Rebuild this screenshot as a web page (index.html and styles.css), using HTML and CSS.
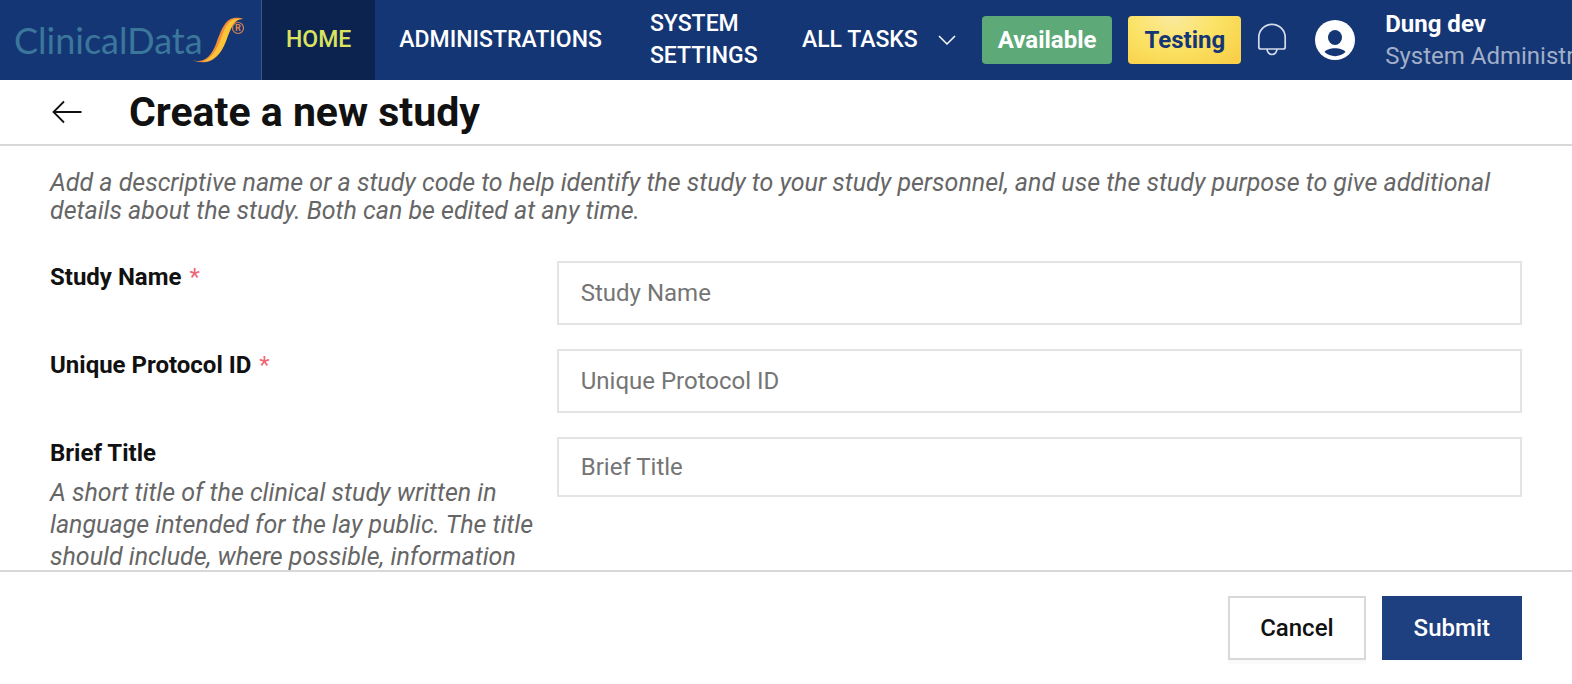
FILE: index.html
```html
<!DOCTYPE html>
<html lang="en">
<head>
    <meta charset="UTF-8">
    <meta name="viewport" content="width=device-width, initial-scale=1.0">
    <title>Create a new study</title>
    <link rel="stylesheet" href="styles.css">
</head>
<body>
    <header class="navbar">
        <a class="logo" href="#">
            <span class="logo-text">ClinicalData</span>
            <svg class="logo-mark" width="56" height="48" viewBox="0 0 56 48" aria-hidden="true">
                <path d="M1 43C14 49 22 41 27 28C34 9 38 -2 55 3C46 2 42 11 37 25C30 44 18 51 1 43Z" fill="#f08d3c"/>
                <path d="M14 45.500C24 42 29 31 33 20C37 8 41 1 53 3C45 3 42 11 37 25C32 38 24 46 14 45.500Z" fill="#fbc436"/>
                <circle cx="49" cy="12" r="5.500" fill="none" stroke="#d9844f" stroke-width="1.200"/>
                <text class="logo-reg" x="49" y="15" text-anchor="middle">R</text>
            </svg>
        </a>
        <nav class="menu">
            <a class="menu-item active" href="#">HOME</a>
            <a class="menu-item" href="#">ADMINISTRATIONS</a>
            <a class="menu-item menu-system" href="#">SYSTEM SETTINGS</a>
            <a class="menu-item" href="#">ALL TASKS
                <svg class="chevron" width="18" height="12" viewBox="0 0 18 12" aria-hidden="true">
                    <path d="M1 2L9 10L17 2" fill="none" stroke="#fff" stroke-width="1.5"/>
                </svg>
            </a>
        </nav>
        <div class="tools">
            <button class="tag tag-available" type="button">Available</button>
            <button class="tag tag-testing" type="button">Testing</button>
            <button class="icon-btn" type="button" aria-label="Notifications">
                <svg width="30" height="34" viewBox="0 0 30 34">
                    <path d="M1.8 24V14.5a13.2 13.2 0 0 1 26.400 0V24a2 2 0 0 1-2 2H3.800a2 2 0 0 1-2-2ZM10 26a5 5.500 0 0 0 10 0" fill="none" stroke="#d3daea" stroke-width="1.700"/>
                </svg>
            </button>
        </div>
        <a class="user" href="#">
            <svg class="avatar" width="40" height="40" viewBox="0 0 40 40" aria-hidden="true">
                <circle cx="20" cy="20" r="20" fill="#fff"/>
                <ellipse cx="20" cy="17.500" rx="7" ry="7.500" fill="#153675"/>
                <path d="M9.500 32C13 27 27 27 30.500 32C25 37.500 15 37.500 9.500 32Z" fill="#153675"/>
            </svg>
            <span class="user-info">
                <span class="user-name">Dung dev</span>
                <span class="user-role">System Administrator</span>
            </span>
        </a>
    </header>

    <div class="title-bar">
        <a class="back" href="#" aria-label="Back">
            <svg width="30" height="24" viewBox="0 0 30 24">
                <path d="M12 1.500L1.500 12L12 22.500M1.500 12H29.500" fill="none" stroke="#111" stroke-width="1.800"/>
            </svg>
        </a>
        <h1>Create a new study</h1>
    </div>

    <form class="study-form" id="study-form">
        <p class="intro">Add a descriptive name or a study code to help identify the study to your study personnel, and use the study purpose to give additional details about the study. Both can be edited at any time.</p>
        <div class="form-row">
            <label for="study-name">Study Name <span class="required">*</span></label>
            <input class="field" type="text" id="study-name" placeholder="Study Name" required>
        </div>
        <div class="form-row">
            <label for="protocol-id">Unique Protocol ID <span class="required">*</span></label>
            <input class="field" type="text" id="protocol-id" placeholder="Unique Protocol ID" required>
        </div>
        <div class="form-row">
            <div>
                <label for="brief-title">Brief Title</label>
                <p class="help">A short title of the clinical study written in language intended for the lay public. The title should include, where possible, information</p>
            </div>
            <input class="field field-small" type="text" id="brief-title" placeholder="Brief Title">
        </div>
    </form>

    <footer class="actions">
        <button class="btn btn-cancel" type="button">Cancel</button>
        <button class="btn btn-submit" type="submit" form="study-form">Submit</button>
    </footer>
</body>
</html>
```

FILE: styles.css
```css
* {
    box-sizing: border-box;
}
body {
    margin: 0;
    height: 100vh;
    display: flex;
    flex-direction: column;
    overflow: hidden;
    font-family: Roboto, Arial, sans-serif;
    font-size: 24px;
    line-height: 32px;
    color: #111;
    background: #fff;
}
a {
    color: inherit;
    text-decoration: none;
}
button,
input {
    font: inherit;
}

/* navbar */
.navbar {
    display: flex;
    flex-shrink: 0;
    height: 80px;
    background: #153675;
    color: #fff;
    font-weight: 500;
}
.logo {
    display: flex;
    align-items: center;
    flex: 0 0 262px;
    padding-left: 14px;
    border-right: 1px solid #3c5790;
}
.logo-text {
    font-family: Lato, sans-serif;
    font-size: 36px;
    font-weight: 400;
    color: #3b779b;
}
.logo-mark {
    flex-shrink: 0;
    margin-left: -14px;
}
.logo-reg {
    font-size: 9px;
    font-weight: 700;
    fill: #d9844f;
}
.menu {
    display: flex;
    flex-shrink: 0;
    font-size: 23px;
    white-space: nowrap;
}
.menu-item {
    display: flex;
    align-items: center;
    padding: 0 24px;
}
.menu-item.active {
    background: #0c2350;
    color: #dbe35f;
}
.menu-system {
    width: 152px;
    white-space: normal;
}
.chevron {
    margin-left: 20px;
}
.tools {
    display: flex;
    align-items: center;
    flex-shrink: 0;
    gap: 16px;
    margin-left: 2px;
}
.tag {
    height: 48px;
    padding: 0 16px;
    border: 0;
    border-radius: 4px;
    font-weight: 700;
}
.tag-available {
    background: #5da978;
    color: #fff;
}
.tag-testing {
    background: radial-gradient(ellipse at 40% 0, #fbe9a0 0%, #fbe366 45%, #f9d048 90%);
    color: #153675;
}
.icon-btn {
    display: flex;
    padding: 0;
    border: 0;
    background: none;
}
.user {
    display: flex;
    align-items: center;
    margin-left: 28px;
}
.avatar {
    flex-shrink: 0;
}
.user-info {
    display: flex;
    flex-direction: column;
    margin-left: 30px;
    white-space: nowrap;
}
.user-name {
    font-weight: 700;
}
.user-role {
    font-weight: 400;
    color: #a1afc8;
}

/* title */
.title-bar {
    display: flex;
    align-items: center;
    flex-shrink: 0;
    height: 66px;
    padding: 0 52px;
    border-bottom: 2px solid #d8d8d8;
}
.back {
    display: flex;
}
.title-bar h1 {
    margin: 0 0 0 47px;
    font-size: 41px;
    line-height: 48px;
    font-weight: 700;
}

/* form */
.study-form {
    flex: 1;
    min-height: 0;
    padding: 23px 50px 0;
    overflow-y: auto;
    scrollbar-width: none;
}
.intro,
.help {
    margin: 0;
    font-size: 25px;
    font-style: italic;
    color: #666;
}
.intro {
    margin-bottom: 36px;
    line-height: 28px;
}
.form-row {
    display: grid;
    grid-template-columns: 21fr 40fr;
    align-items: start;
    margin-bottom: 24px;
}
.form-row label {
    display: block;
    font-weight: 700;
}
.required {
    margin-left: 2px;
    font-weight: 400;
    color: #ef6676;
}
.help {
    margin-top: 8px;
    padding-right: 8px;
}
.field {
    width: 100%;
    height: 64px;
    padding: 0 22px;
    border: 2px solid #e4e4e4;
    border-radius: 0;
    color: #111;
    background: #fff;
}
.field-small {
    height: 60px;
}
.field::placeholder {
    color: #757575;
}

/* footer */
.actions {
    display: flex;
    justify-content: flex-end;
    flex-shrink: 0;
    gap: 16px;
    padding: 24px 50px;
    border-top: 2px solid #d8d8d8;
}
.btn {
    height: 64px;
    padding: 0 30px;
    border: 2px solid #d8d8d8;
    font-weight: 500;
}
.btn-cancel {
    background: #fff;
    color: #111;
    box-shadow: 0 4px 0 #fafafa;
}
.btn-submit {
    background: #1f4080;
    border-color: #1f4080;
    color: #fff;
}
```
